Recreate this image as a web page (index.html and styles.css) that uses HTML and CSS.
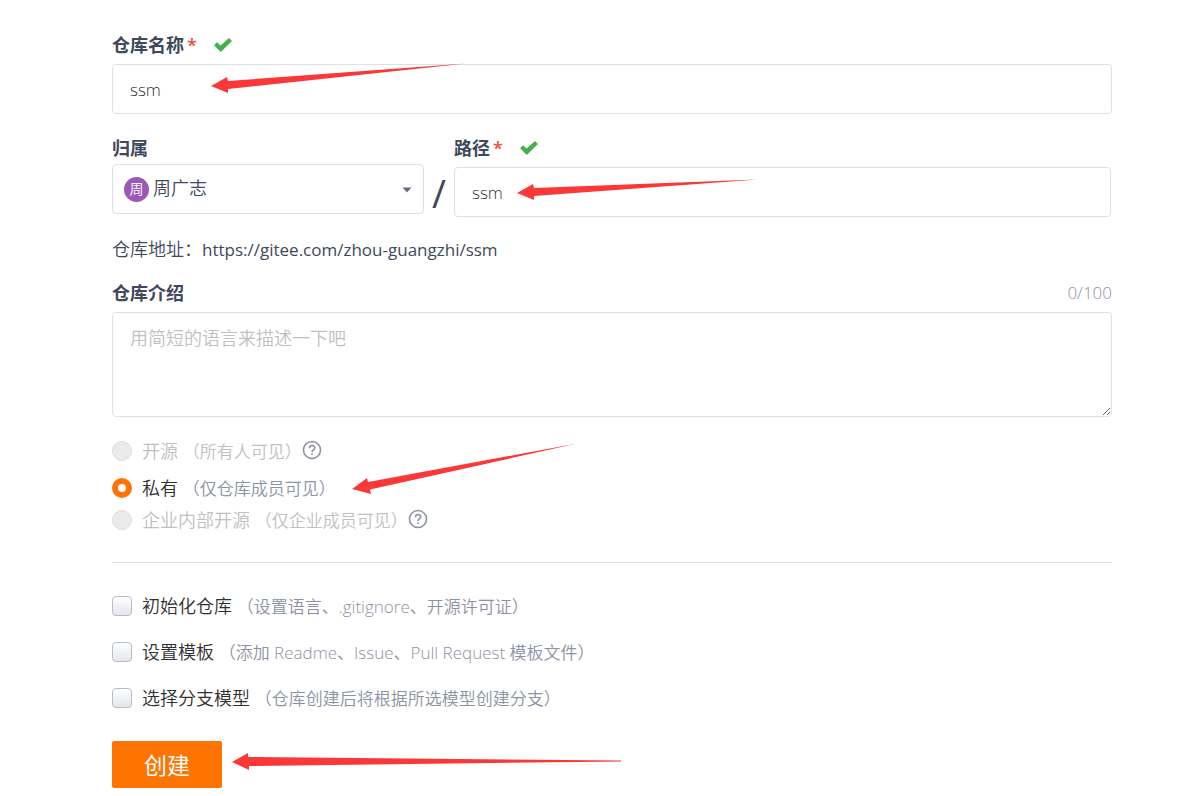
FILE: index.html
```
<!DOCTYPE html>
<html lang="zh-CN">
<head>
  <meta charset="UTF-8">
  <meta name="viewport" content="width=device-width, initial-scale=1">
  <title>新建仓库</title>
  <link rel="stylesheet" href="styles.css">
</head>
<body>
  <form class="repo-form">
    <!-- Name -->
    <div class="field">
      <div class="field-label">
        <label for="repoName">仓库名称</label><span class="required">*</span>
        <svg class="check" viewBox="0 0 18 14"><path d="M0 7.2 3 4.2 6.6 7.6 15 0 18 3 6.8 14Z"/></svg>
      </div>
      <input class="text-input" type="text" id="repoName" value="ssm">
      <svg class="arrow arrow-name" viewBox="0 0 256 32"><path d="M0 23 16 14 17 18 255 0.5 17 26 17 30Z"/></svg>
    </div>

    <!-- Owner and path -->
    <div class="path-row">
      <div class="field owner">
        <div class="field-label"><label for="owner">归属</label></div>
        <div class="select-wrap">
          <span class="avatar">周</span>
          <select id="owner">
            <option>周广志</option>
          </select>
          <svg class="caret" viewBox="0 0 10 6"><path d="M0.5 0.5h9L5 5.5Z"/></svg>
        </div>
      </div>
      <span class="slash">/</span>
      <div class="field">
        <div class="field-label">
          <label for="repoPath">路径</label><span class="required">*</span>
          <svg class="check" viewBox="0 0 18 14"><path d="M0 7.2 3 4.2 6.6 7.6 15 0 18 3 6.8 14Z"/></svg>
        </div>
        <input class="text-input" type="text" id="repoPath" value="ssm">
        <svg class="arrow arrow-path" viewBox="0 0 242 24"><path d="M0 14 16 5 17 9 241 0.5 17 17 17 21Z"/></svg>
      </div>
    </div>

    <p class="address">仓库地址：<span class="url">https://gitee.com/zhou-guangzhi/ssm</span></p>

    <!-- Description -->
    <div class="field">
      <div class="field-label">
        <label for="repoDesc">仓库介绍</label>
        <span class="counter">0/100</span>
      </div>
      <textarea id="repoDesc" placeholder="用简短的语言来描述一下吧"></textarea>
    </div>

    <!-- Visibility -->
    <div class="visibility">
      <div class="option disabled">
        <input type="radio" name="visibility" id="public" disabled>
        <label for="public">开源 <span class="hint">（所有人可见）</span></label>
        <svg class="help" viewBox="0 0 20 20"><circle cx="10" cy="9" r="8.5"/><path d="M7.4 7.2C7.4 3.6 12.7 3.8 12.7 6.8 12.7 8.9 10 8.8 10 10.9"/><path d="M10 12.3v1.6"/></svg>
      </div>
      <div class="option">
        <input type="radio" name="visibility" id="private" checked>
        <label for="private">私有 <span class="hint">（仅仓库成员可见）</span></label>
        <svg class="arrow arrow-private" viewBox="0 0 226 52"><path d="M0 46 15 35 16 39 225 0.5 18 46.5 19 51Z"/></svg>
      </div>
      <div class="option disabled">
        <input type="radio" name="visibility" id="internal" disabled>
        <label for="internal">企业内部开源 <span class="hint">（仅企业成员可见）</span></label>
        <svg class="help" viewBox="0 0 20 20"><circle cx="10" cy="9" r="8.5"/><path d="M7.4 7.2C7.4 3.6 12.7 3.8 12.7 6.8 12.7 8.9 10 8.8 10 10.9"/><path d="M10 12.3v1.6"/></svg>
      </div>
    </div>

    <hr>

    <!-- Extra settings -->
    <div class="extras">
      <div class="option">
        <input type="checkbox" id="init">
        <label for="init">初始化仓库 <span class="hint">（设置语言、.gitignore、开源许可证）</span></label>
      </div>
      <div class="option">
        <input type="checkbox" id="template">
        <label for="template">设置模板 <span class="hint">（添加 Readme、Issue、Pull Request 模板文件）</span></label>
      </div>
      <div class="option">
        <input type="checkbox" id="branch">
        <label for="branch">选择分支模型 <span class="hint">（仓库创建后将根据所选模型创建分支）</span></label>
      </div>
    </div>

    <div class="actions">
      <button type="submit">创建</button>
      <svg class="arrow arrow-submit" viewBox="0 0 390 18"><path d="M0 9 16 0 16 4 389 7.5 389 8.5 17 13 17 17Z"/></svg>
    </div>
  </form>
</body>
</html>
```
FILE: styles.css
```
* {
  box-sizing: border-box;
}

body {
  margin: 0;
  background: #fff;
  color: #40485b;
  font-family: "Open Sans", "Noto Sans CJK SC", sans-serif;
  font-size: 18px;
  font-weight: 350;
  line-height: 26px;
}

input,
select,
textarea,
button {
  margin: 0;
  font: inherit;
}

.repo-form {
  padding: 32px 73px 8px 112px;
}

.field {
  position: relative;
  min-width: 0;
}

.field-label {
  display: flex;
  align-items: center;
  height: 26px;
  margin-bottom: 6px;
}

.field-label label {
  font-weight: 700;
}

.required {
  margin-left: 3px;
  color: #e74c3c;
  font-weight: 600;
}

.check {
  width: 18px;
  height: 14px;
  margin-left: 17px;
  fill: #45b04b;
}

.text-input {
  display: block;
  width: 100%;
  height: 50px;
  padding: 0 17px;
  border: 1px solid #dfe1e8;
  border-radius: 4px;
  color: #303030;
  font-size: 17px;
}

/* Owner / path */
.path-row {
  display: grid;
  grid-template-columns: 312px 30px 1fr;
  align-items: start;
  margin-top: 21px;
  padding-right: 1px;
}

.owner .field-label {
  margin-bottom: 3px;
}

.select-wrap {
  position: relative;
}

.select-wrap select {
  display: block;
  width: 100%;
  height: 50px;
  padding: 0 40px 3px 40px;
  border: 1px solid #d9dfe7;
  border-radius: 4px;
  background: #fff;
  color: #40485b;
  appearance: none;
}

.avatar {
  position: absolute;
  top: 13px;
  left: 12px;
  width: 25px;
  height: 25px;
  border-radius: 50%;
  background: #9b59b6;
  color: #fff;
  font-size: 14px;
  line-height: 24px;
  text-align: center;
}

.caret {
  position: absolute;
  top: 23px;
  right: 12px;
  width: 10px;
  height: 6px;
  fill: #666f80;
}

.slash {
  padding-top: 43px;
  font-size: 38px;
  font-weight: 400;
  line-height: 30px;
  text-align: center;
}

.address {
  margin: 19px 0 17px;
}

.url {
  font-size: 17px;
  font-weight: 400;
}

.counter {
  margin-left: auto;
  color: #8c92a4;
  font-size: 17px;
}

textarea {
  display: block;
  width: 100%;
  height: 105px;
  padding: 12px 17px;
  border: 1px solid #dfe1e8;
  border-radius: 4px;
  resize: vertical;
}

textarea::placeholder {
  color: #c0c0c0;
}

/* Radios and checkboxes */
.visibility {
  display: grid;
  gap: 6px;
  margin-top: 21px;
}

.visibility .option:first-child {
  margin-bottom: 5px;
}

.option {
  position: relative;
  display: flex;
  align-items: center;
  height: 26px;
  color: #303030;
}

.option input {
  flex: none;
  width: 20px;
  height: 20px;
  margin-right: 10px;
  appearance: none;
}

.option input[type="radio"] {
  border: 1px solid #dedede;
  border-radius: 50%;
  background: #ebebeb;
}

.option input[type="radio"]:checked {
  border: 6px solid #ff7300;
  background: #fff;
}

.option input[type="checkbox"] {
  border: 1px solid #b9bcc4;
  border-radius: 4px;
  background: linear-gradient(#fff, #e4e6ea);
}

.hint {
  color: #8c92a4;
  font-size: 17px;
}

.disabled,
.disabled .hint {
  color: #c0c0c0;
}

.help {
  width: 20px;
  height: 20px;
  fill: none;
  stroke: #8c92a4;
  stroke-width: 1.6;
  overflow: visible;
}

hr {
  height: 1px;
  margin: 29px 0 30px;
  border: 0;
  background: #d9e0e7;
}

.extras {
  display: grid;
  gap: 20px;
}

.actions {
  position: relative;
  margin-top: 30px;
}

.actions button {
  display: block;
  width: 110px;
  height: 47px;
  border: 0;
  border-radius: 2px;
  background: #ff7300;
  color: #fff;
  font-size: 23px;
  font-weight: 400;
  cursor: pointer;
}

/* Red pointers laid over the form */
.arrow {
  position: absolute;
  fill: #fb3838;
  pointer-events: none;
}

.arrow-name {
  top: 31px;
  left: 99px;
  width: 256px;
  height: 32px;
}

.arrow-path {
  top: 44px;
  left: 63px;
  width: 242px;
  height: 24px;
}

.arrow-private {
  top: -32px;
  left: 240px;
  width: 226px;
  height: 52px;
}

.arrow-submit {
  top: 12px;
  left: 120px;
  width: 390px;
  height: 18px;
}
```
